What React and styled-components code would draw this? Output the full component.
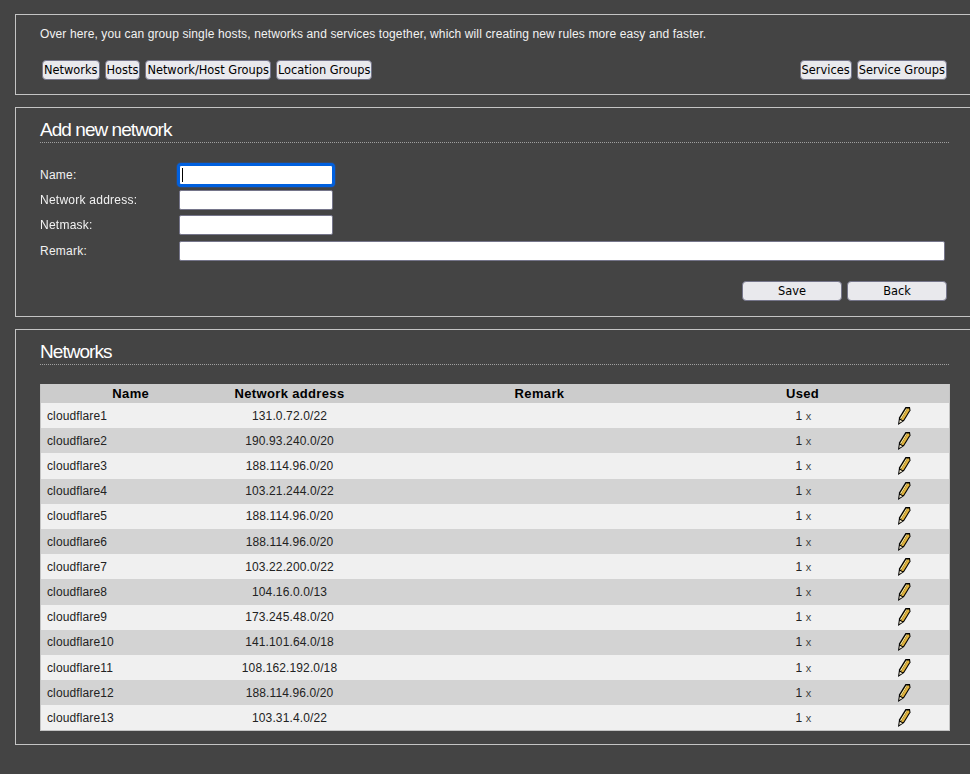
import styled, { createGlobalStyle } from "styled-components";

const networks = [
  ["cloudflare1", "131.0.72.0/22"],
  ["cloudflare2", "190.93.240.0/20"],
  ["cloudflare3", "188.114.96.0/20"],
  ["cloudflare4", "103.21.244.0/22"],
  ["cloudflare5", "188.114.96.0/20"],
  ["cloudflare6", "188.114.96.0/20"],
  ["cloudflare7", "103.22.200.0/22"],
  ["cloudflare8", "104.16.0.0/13"],
  ["cloudflare9", "173.245.48.0/20"],
  ["cloudflare10", "141.101.64.0/18"],
  ["cloudflare11", "108.162.192.0/18"],
  ["cloudflare12", "188.114.96.0/20"],
  ["cloudflare13", "103.31.4.0/22"],
];

const Pencil = () => (
  <svg width="14" height="20" viewBox="0 0 14 20">
    <path d="M1 19 L2 11.5 L8.5 1 L13 1 L13.5 4.5 L7 15 Z" fill="#000" />
    <path d="M3 13 L3.4 11.8 L9.2 2.4 L10.4 2.4 L4.6 12.4 Z" fill="#fbeb9c" />
    <path d="M4.6 12.4 L10.4 2.4 L12.2 2.4 L12.4 4.2 L6.4 14 L4.4 14.2 Z" fill="#e0b23c" />
    <path d="M2.2 17 L2.8 13.8 L5.4 15.2 Z" fill="#f3ead0" />
  </svg>
);

const App = () => {
  return (
    <Page>
      <GlobalStyle />
      <Panel $height={81}>
        <Intro>
          Over here, you can group single hosts, networks and services together, which will creating new
          rules more easy and faster.
        </Intro>
        <Toolbar>
          <ButtonGroup>
            <NavButton>Networks</NavButton>
            <NavButton>Hosts</NavButton>
            <NavButton>Network/Host Groups</NavButton>
            <NavButton>Location Groups</NavButton>
          </ButtonGroup>
          <ButtonGroup>
            <NavButton>Services</NavButton>
            <NavButton>Service Groups</NavButton>
          </ButtonGroup>
        </Toolbar>
      </Panel>

      <Panel $height={210}>
        <Heading>Add new network</Heading>
        <Form>
          <Label>Name:</Label>
          <Input autoFocus />
          <Label>Network address:</Label>
          <Input />
          <Label>Netmask:</Label>
          <Input />
          <Label>Remark:</Label>
          <Input $wide />
        </Form>
        <FormActions>
          <ActionButton>Save</ActionButton>
          <ActionButton>Back</ActionButton>
        </FormActions>
      </Panel>

      <Panel $height={416}>
        <Heading>Networks</Heading>
        <Table>
          <colgroup>
            <col style={{ width: 180 }} />
            <col style={{ width: 138 }} />
            <col style={{ width: 362 }} />
            <col style={{ width: 164 }} />
            <col />
          </colgroup>
          <thead>
            <tr>
              <HeadCell>Name</HeadCell>
              <HeadCell>Network address</HeadCell>
              <HeadCell>Remark</HeadCell>
              <HeadCell>Used</HeadCell>
              <HeadCell />
            </tr>
          </thead>
          <tbody>
            {networks.map(([name, address]) => (
              <Row key={name}>
                <NameCell>{name}</NameCell>
                <Cell>{address}</Cell>
                <Cell />
                <UsedCell>
                  1 <Small>x</Small>
                </UsedCell>
                <IconCell>
                  <Pencil />
                </IconCell>
              </Row>
            ))}
          </tbody>
        </Table>
      </Panel>
    </Page>
  );
};

const GlobalStyle = createGlobalStyle`
  html, body {
    margin: 0;
    background: #444444;
    overflow: hidden;
  }
  * {
    box-sizing: border-box;
  }
`;

const Page = styled.div`
  display: flex;
  flex-direction: column;
  gap: 12px;
  width: 970px;
  height: 774px;
  padding: 14px 0 0 15px;
  overflow: hidden;
  font-family: "Liberation Sans", Arial, sans-serif;
  font-size: 12px;
  letter-spacing: 0.12px;
  color: #f2f2f2;
`;

const Panel = styled.section`
  flex: none;
  width: 975px;
  height: ${(p) => p.$height}px;
  padding: 0 0 0 24px;
  border: 1px solid #c4c4c4;
`;

const Intro = styled.p`
  margin: 0;
  padding-top: 12px;
  line-height: 14px;
`;

const Toolbar = styled.div`
  display: flex;
  justify-content: space-between;
  width: 905px;
  margin: 19px 0 0 2px;
`;

const ButtonGroup = styled.div`
  display: flex;
  gap: 5px;
`;

const NavButton = styled.button`
  height: 20px;
  padding: 0 1px;
  border: 1.5px solid #75758a;
  border-radius: 4px;
  background: #e9e9ed;
  color: #000;
  font-family: "DejaVu Sans", Verdana, sans-serif;
  font-size: 11.4px;
  letter-spacing: 0;
`;

const Heading = styled.h2`
  width: 909px;
  height: 35px;
  margin: 0;
  padding-top: 11px;
  border-bottom: 1px dotted #a0a0a0;
  color: #fff;
  font-size: 19px;
  font-weight: 400;
  line-height: 21px;
  letter-spacing: -0.95px;
`;

const Form = styled.div`
  display: grid;
  grid-template-columns: 139px 154px 1fr;
  grid-auto-rows: 20px;
  row-gap: 5.2px;
  align-items: center;
  margin-top: 22px;
`;

const Label = styled.label`
  grid-column: 1;
  letter-spacing: 0.25px;
`;

const Input = styled.input`
  grid-column: ${(p) => (p.$wide ? "2 / 4" : "2")};
  width: ${(p) => (p.$wide ? "766px" : "154px")};
  height: 20px;
  padding: 1px 2px;
  border: 1px solid #75758a;
  border-radius: 2px;
  background: #fff;
  &:focus {
    outline: 2px solid #0060df;
    outline-offset: 0;
    box-shadow: 0 0 0 3px #3a4a66;
    border-color: #0060df;
    caret-color: transparent;
    background: linear-gradient(#000, #000) 2px 2px / 1px 14px no-repeat, #fff;
  }
`;

const FormActions = styled.div`
  display: flex;
  justify-content: flex-end;
  gap: 5px;
  width: 907px;
  margin-top: 20.4px;
`;

const ActionButton = styled(NavButton)`
  width: 100px;
  padding-top: 1px;
`;

const Table = styled.table`
  width: 910px;
  margin-top: 19px;
  border-collapse: collapse;
  table-layout: fixed;
  color: #222;
  border-right: 1px solid #c4c4c4;
  border-bottom: 1px solid #c4c4c4;
  border-left: 1px solid #c4c4c4;
`;

const HeadCell = styled.th`
  height: 19.1px;
  padding: 0;
  background: #cccccc;
  color: #000;
  font-size: 13px;
  font-weight: 700;
  letter-spacing: 0.35px;
  text-align: center;
`;

const Row = styled.tr`
  height: 25.2px;
  background: #f0f0f0;
  &:nth-child(even) {
    background: #d3d3d3;
  }
`;

const Cell = styled.td`
  padding: 0;
  text-align: center;
`;

const NameCell = styled(Cell)`
  padding-left: 6px;
  text-align: left;
`;

const UsedCell = styled(Cell)`
  padding-left: 2px;
`;

const IconCell = styled(Cell)`
  padding-right: 25px;
  line-height: 0;
`;

const Small = styled.span`
  font-size: 11px;
  color: #444;
`;

export default App;
